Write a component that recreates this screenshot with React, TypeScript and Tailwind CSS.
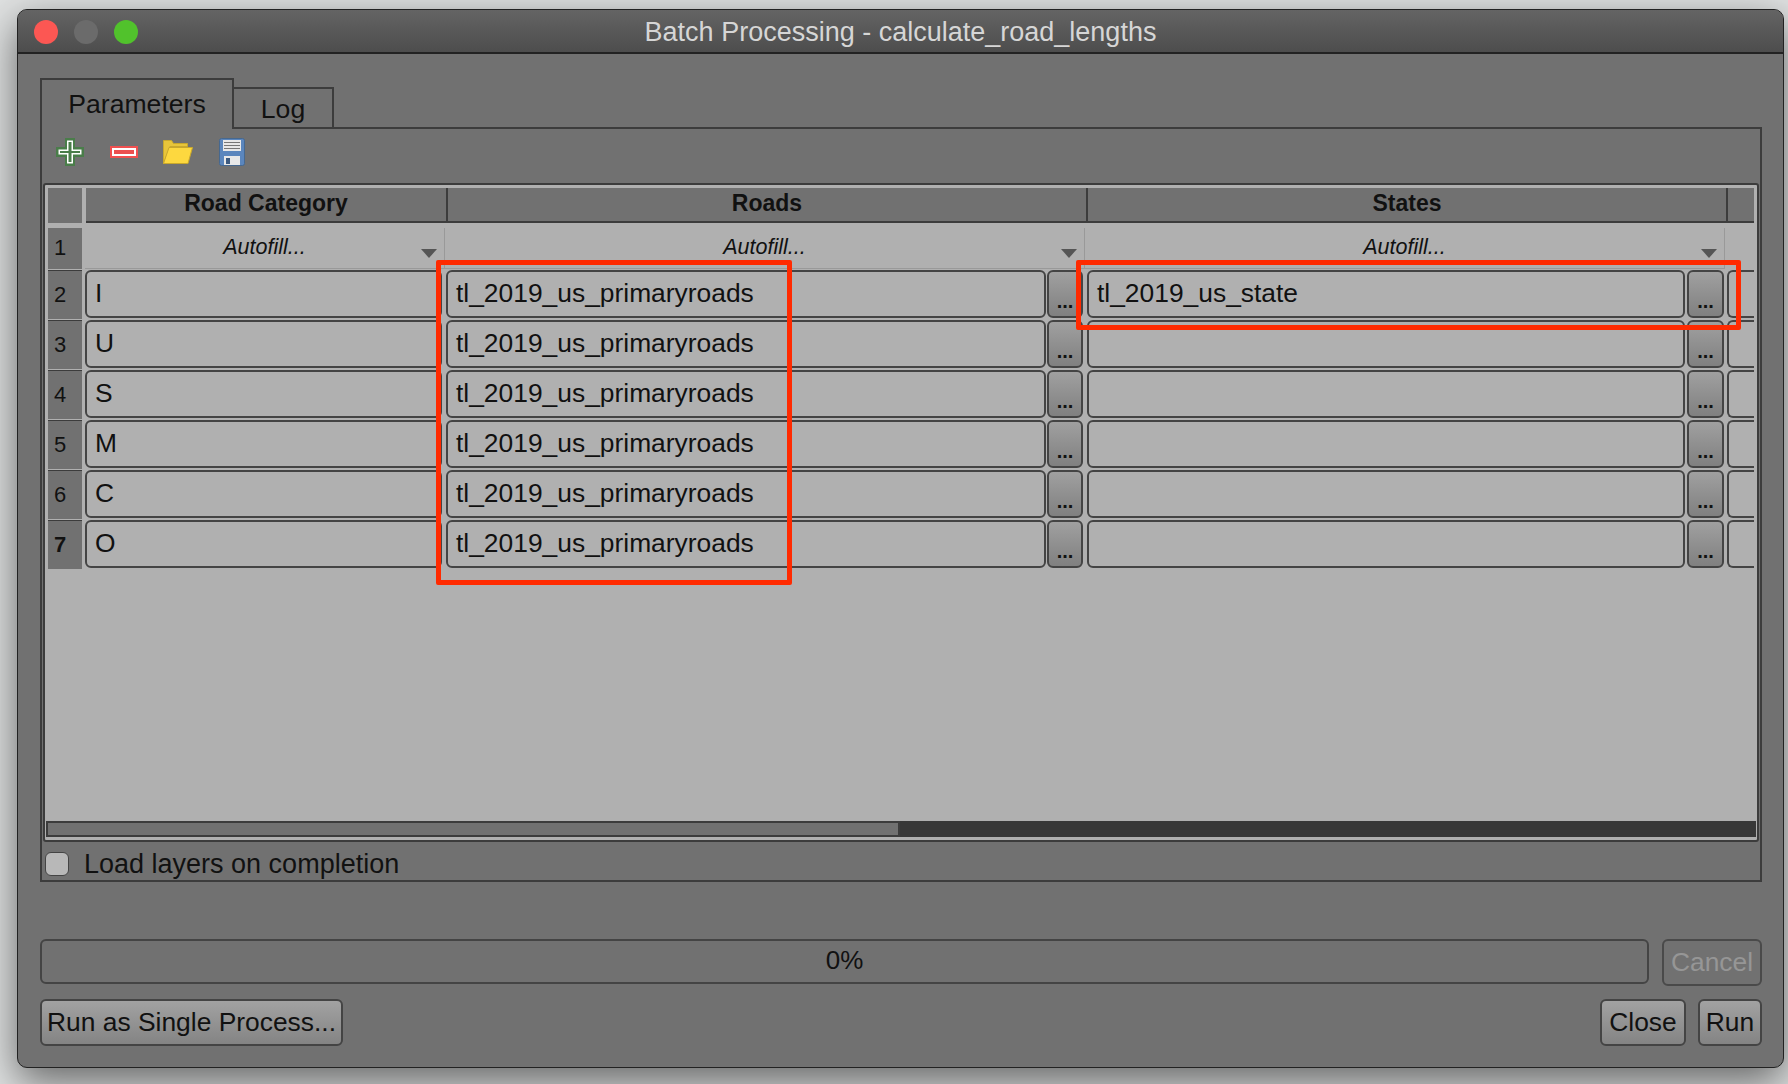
import React from 'react';

const rows = [
  { n: 2, cat: 'I', state: 'tl_2019_us_state' },
  { n: 3, cat: 'U', state: '' },
  { n: 4, cat: 'S', state: '' },
  { n: 5, cat: 'M', state: '' },
  { n: 6, cat: 'C', state: '' },
  { n: 7, cat: 'O', state: '' },
];

// Small "..." push button next to each cell
const DotsButton = ({ className }: { className: string }) => (
  <div className={`h-[48px] rounded-[6px] border-2 border-[#444444] bg-gradient-to-b from-[#a0a0a0] to-[#808080] flex items-end justify-center pb-[3px] text-[20px] font-bold leading-[24px] text-[#111111] ${className}`}>
    ...
  </div>
);

const Cell = ({ text, className }: { text: string; className: string }) => (
  <div className={`h-[48px] rounded-[6px] border-2 border-[#444444] bg-[#b0b0b0] flex items-center pl-[8px] text-[26.4px] text-[#111111] ${className}`}>
    {text}
  </div>
);

const Autofill = ({ className }: { className: string }) => (
  <div className={`relative h-[40px] border-r border-[#999999] flex items-center justify-center pb-[1px] text-[21.5px] italic text-[#111111] ${className}`}>
    Autofill...
    <svg className="absolute right-[7px] top-[21px]" width="16" height="9" viewBox="0 0 16 9">
      <path d="M0 0h16L8 9z" fill="#555555" />
    </svg>
  </div>
);

const PushButton = ({ label, className }: { label: string; className: string }) => (
  <div className={`h-[47px] rounded-[6px] border-2 border-[#444444] bg-gradient-to-b from-[#a2a2a2] to-[#848484] flex items-center justify-center text-[26.4px] text-[#111111] ${className}`}>
    {label}
  </div>
);

const PlusIcon = () => (
  <svg width="28" height="28" viewBox="0 0 28 28">
    <path d="M9 0h10v9h9v10h-9v9H9v-9H0V9h9z" fill="#4a7d4a" />
    <path d="M11 2.5h6v9h8.5v5H17v9h-6v-9H2.5v-5H11z" fill="#ffffff" />
    <path d="M12.5 4h3v9h8.5v2h-8.5v9h-3v-9H4v-2h8.5z" fill="#4a7d4a" />
  </svg>
);

const MinusIcon = () => (
  <svg width="28" height="12" viewBox="0 0 28 12">
    <rect width="28" height="12" fill="#f05050" />
    <rect x="2" y="2" width="24" height="8" fill="#ffffff" />
    <rect x="4" y="4" width="20" height="4" fill="#ec4f4f" />
  </svg>
);

const FolderIcon = () => (
  <svg width="30" height="24" viewBox="0 0 30 24">
    <path d="M0.5 23.5V0.5h8l2 3h14v3H7z" fill="#e8c53a" stroke="#c9a82c" />
    <path d="M6 7.5h23.5L25 23.5H0.5z" fill="#fdd83f" stroke="#c9a82c" />
  </svg>
);

const SaveIcon = () => (
  <svg width="26" height="28" viewBox="0 0 26 28">
    <rect x="0.5" y="0.5" width="25" height="27" rx="2" fill="#5b86bd" stroke="#46688f" />
    <rect x="4" y="2" width="18" height="11" fill="#e8e8e8" />
    <path d="M5 4.5h16M5 7.5h16M5 10.5h16" stroke="#777777" strokeWidth="1" />
    <rect x="5" y="18" width="16" height="9" fill="#e8e8e8" />
    <rect x="7" y="20" width="4" height="6" fill="#3c5a80" />
  </svg>
);

export default function App() {
  return (
    <div className="relative w-[1788px] h-[1084px] overflow-hidden bg-[#dfe1e1] pt-[9px] pl-[17px] font-['Liberation_Sans',Arial,sans-serif]">
      <div className="w-[1767px] h-[1059px] rounded-[10px] border border-[#222222] bg-[#717171] flex flex-col overflow-hidden shadow-[0_14px_40px_rgba(0,0,0,0.55)]">
        {/* title bar */}
        <div className="relative h-[44px] shrink-0 bg-gradient-to-b from-[#646464] to-[#4d4d4d] border-b-2 border-[#222222] flex items-center justify-center pt-[3px] text-[27px] text-[#d6d6d6]">
          <div className="absolute left-[16px] top-[10px] flex gap-[16px]">
            <div className="w-[24px] h-[24px] rounded-full bg-[#fc5753]" />
            <div className="w-[24px] h-[24px] rounded-full bg-[#6b6b6b]" />
            <div className="w-[24px] h-[24px] rounded-full bg-[#51c22c]" />
          </div>
          Batch Processing - calculate_road_lengths
        </div>

        <div className="flex-1 flex flex-col pl-[22px] pr-[21px]">
          {/* tabs */}
          <div className="relative z-10 h-[73px] shrink-0 flex items-end">
            <div className="w-[194px] h-[51px] -mb-[2px] border-2 border-b-0 border-[#3c3c3c] bg-[#717171] flex items-center justify-center pt-[1px] text-[26.6px] text-[#111111]">
              Parameters
            </div>
            <div className="w-[100px] h-[40px] border-2 border-l-0 border-b-0 border-[#3c3c3c] flex items-center justify-center pt-[4px] text-[26.6px] text-[#111111]">
              Log
            </div>
          </div>

          {/* pane */}
          <div className="h-[755px] shrink-0 border-2 border-[#3c3c3c] flex flex-col">
            <div className="h-[54px] shrink-0 flex items-center pl-[14px] pb-[8px]">
              <div className="w-[54px]"><PlusIcon /></div>
              <div className="w-[53px]"><MinusIcon /></div>
              <div className="w-[56px]"><FolderIcon /></div>
              <SaveIcon />
            </div>

            {/* table */}
            <div className="h-[659px] ml-[1px] mr-[1px] shrink-0 border-2 border-[#3c3c3c] rounded-[3px] bg-[#b0b0b0] p-[3px] flex flex-col">
              <div className="h-[35px] shrink-0 flex text-[23px] font-bold text-[#111111]">
                <div className="w-[34px] bg-[#717171]" />
                <div className="w-[4px]" />
                <div className="w-[362px] bg-[#717171] border-b-2 border-r-2 border-[#3c3c3c] flex items-center justify-center pb-[3px]">Road Category</div>
                <div className="w-[640px] bg-[#717171] border-b-2 border-r-2 border-[#3c3c3c] flex items-center justify-center pb-[3px]">Roads</div>
                <div className="w-[640px] bg-[#717171] border-b-2 border-r-2 border-[#3c3c3c] flex items-center justify-center pb-[3px]">States</div>
                <div className="w-[26px] bg-[#717171] border-b-2 border-[#3c3c3c]" />
              </div>

              <div className="flex-1 flex flex-col pt-[5px] overflow-hidden">
                <div className="h-[42px] shrink-0 flex">
                  <div className="w-[34px] h-[41px] bg-[#717171] flex items-center pl-[6px] pb-[2px] text-[22px] text-[#111111]">1</div>
                  <div className="h-[41px] flex border-b border-[#999999] ml-[3px]">
                    <Autofill className="w-[360px]" />
                    <Autofill className="w-[640px]" />
                    <Autofill className="w-[640px]" />
                  </div>
                </div>

                {rows.map((row) => (
                  <div key={row.n} className="h-[50px] shrink-0 flex">
                    <div className={`w-[34px] h-[49px] bg-[#717171] border-t border-[#3c3c3c] flex items-center pl-[6px] pb-[2px] text-[22px] text-[#111111] ${row.n === 7 ? 'font-bold' : ''}`}>
                      {row.n}
                    </div>
                    <Cell text={row.cat} className="w-[357px] ml-[3px]" />
                    <Cell text="tl_2019_us_primaryroads" className="w-[600px] ml-[4px]" />
                    <DotsButton className="w-[36px] ml-[1px]" />
                    <Cell text={row.state} className="w-[598px] ml-[4px]" />
                    <DotsButton className="w-[37px] ml-[2px]" />
                    <div className="w-[27px] h-[48px] ml-[3px] rounded-l-[6px] border-2 border-r-0 border-[#444444]" />
                  </div>
                ))}
              </div>

              {/* horizontal scroll bar */}
              <div className="h-[16px] shrink-0 -mx-[2px] flex bg-[#383838]">
                <div className="w-[854px] bg-[#717171] border-2 border-[#3c3c3c]" />
              </div>
            </div>

            <div className="flex-1 flex items-center pl-[3px] gap-[15px] pt-[2px] text-[27px] text-[#111111]">
              <div className="w-[24px] h-[24px] rounded-[6px] border border-[#444444] bg-[#b8b8b8]" />
              Load layers on completion
            </div>
          </div>

          {/* progress and buttons */}
          <div className="mt-[57px] flex items-start">
            <div className="w-[1609px] h-[45px] rounded-[6px] border-2 border-[#444444] flex items-center justify-center pb-[2px] text-[26px] text-[#111111]">
              0%
            </div>
            <div className="w-[100px] h-[47px] ml-[13px] rounded-[6px] border-2 border-[#4a4a4a] flex items-center justify-center text-[26.4px] text-[#969696]">
              Cancel
            </div>
          </div>
          <div className="mt-[13px] flex">
            <PushButton label="Run as Single Process..." className="w-[303px]" />
            <div className="flex-1" />
            <PushButton label="Close" className="w-[86px]" />
            <PushButton label="Run" className="w-[64px] ml-[12px]" />
          </div>
        </div>
      </div>

      {/* red annotation boxes drawn over the table */}
      <div className="absolute left-[436px] top-[260px] w-[356px] h-[325px] rounded-[2px] border-[5px] border-[#ff2a00]" />
      <div className="absolute left-[1076px] top-[260px] w-[665px] h-[70px] rounded-[2px] border-[5px] border-[#ff2a00]" />
    </div>
  );
}
